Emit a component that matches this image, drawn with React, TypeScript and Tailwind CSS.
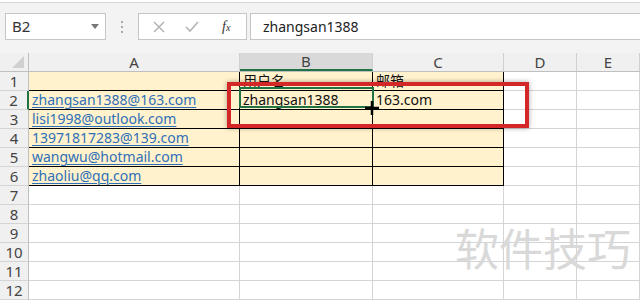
import React from "react";

const cols = [
  { key: "A", w: "w-[211px]" },
  { key: "B", w: "w-[133px]" },
  { key: "C", w: "w-[131px]" },
  { key: "D", w: "w-[73px]" },
  { key: "E", w: "flex-1" },
];

const emails = [
  "zhangsan1388@163.com",
  "lisi1998@outlook.com",
  "13971817283@139.com",
  "wangwu@hotmail.com",
  "zhaoliu@qq.com",
];

function Toolbar() {
  return (
    <div className="h-[51px] bg-[#f3f3f3] border-t-[1px] border-[#d6d6d6] mt-[2px] flex items-start pt-[10px] pl-[5px] pr-0">
      <div className="w-[101px] h-[27px] bg-white border border-[#c6c6c6] flex items-center justify-between pl-[6px] pr-[6px] text-[15px] text-[#333]">
        <span>B2</span>
        <span className="w-0 h-0 border-l-[4px] border-r-[4px] border-t-[5px] border-l-transparent border-r-transparent border-t-[#777]" />
      </div>
      <div className="w-[32px] h-[27px] flex flex-col items-center justify-center gap-[3px]">
        <span className="w-[2px] h-[2px] bg-[#aaa]" />
        <span className="w-[2px] h-[2px] bg-[#aaa]" />
        <span className="w-[2px] h-[2px] bg-[#aaa]" />
      </div>
      <div className="w-[109px] h-[27px] bg-white border border-[#c6c6c6] flex items-center">
        <svg width="14" height="14" viewBox="0 0 14 14" className="ml-[13px]">
          <path d="M2 2 L12 12 M12 2 L2 12" stroke="#b4b4b4" strokeWidth="1.5" />
        </svg>
        <svg width="16" height="14" viewBox="0 0 16 14" className="ml-[18px]">
          <path d="M2 7 L6 11 L14 2" stroke="#b4b4b4" strokeWidth="1.6" fill="none" />
        </svg>
        <span className="ml-[22px] text-[14px] italic text-[#333] font-['Liberation_Serif',serif]">
          f<span className="text-[10px]">x</span>
        </span>
      </div>
      <div className="ml-[3px] flex-1 h-[27px] bg-white border border-r-0 border-[#c6c6c6] flex items-center pl-[12px] text-[14px] text-[#222]">
        zhangsan1388
      </div>
    </div>
  );
}

function HeaderRow() {
  return (
    <div className="flex h-[19px] bg-[#f0f0f0] border-b border-[#bfbfbf]">
      <div className="w-[29px] border-r border-[#bfbfbf] flex items-end justify-end pr-[4px] pb-[3px]">
        <svg width="12" height="12" viewBox="0 0 12 12">
          <path d="M12 0 L12 12 L0 12 Z" fill="#d0d0d0" />
        </svg>
      </div>
      {cols.map((c) => (
        <div
          key={c.key}
          className={`${c.w} flex items-center justify-center text-[15px] leading-none text-[#444] border-r border-[#d0d0d0] ${
            c.key === "B" ? "bg-[#d9d9d9] border-b-2 border-b-[#217346]" : ""
          }`}
        >
          {c.key}
        </div>
      ))}
    </div>
  );
}

function Row({ n }: { n: number }) {
  const inTable = n <= 6;
  const sel = n === 2;
  const cellBase = "h-full flex items-end pl-[3px] pb-[1px] text-[14px] leading-[17px] whitespace-nowrap overflow-hidden";
  const tbl = inTable ? "bg-[#fff2cc] border-r border-b border-black" : "border-r border-b border-[#d4d4d4]";
  return (
    <div className="flex h-[19px]">
      <div
        className={`w-[29px] h-full flex items-center justify-center text-[15px] text-[#444] bg-[#f0f0f0] border-b border-[#d4d4d4] ${
          sel ? "bg-[#d9d9d9] border-r-2 border-r-[#217346]" : "border-r border-r-[#bfbfbf]"
        }`}
      >
        {n}
      </div>
      <div className={`w-[211px] ${cellBase} ${tbl}`}>
        {n >= 2 && n <= 6 ? (
          <span className="text-[#2f6fb8] underline underline-offset-[2px] decoration-[1px]">{emails[n - 2]}</span>
        ) : null}
      </div>
      <div className={`w-[133px] ${cellBase} ${tbl} text-[#111]`}>
        {n === 1 ? "用户名" : n === 2 ? "zhangsan1388" : ""}
      </div>
      <div className={`w-[131px] ${cellBase} ${tbl} text-[#111]`}>
        {n === 1 ? "邮箱" : n === 2 ? "163.com" : ""}
      </div>
      <div className="w-[73px] h-full border-r border-b border-[#d4d4d4]" />
      <div className="flex-1 h-full border-r border-b border-[#d4d4d4]" />
    </div>
  );
}

export default function App() {
  return (
    <div className="w-[640px] h-[300px] overflow-hidden bg-white relative font-['Noto_Sans','Noto_Sans_CJK_SC',sans-serif]">
      <Toolbar />
      <HeaderRow />
      {Array.from({ length: 12 }, (_, i) => (
        <Row key={i} n={i + 1} />
      ))}

      {/* selected cell B2 */}
      <div className="absolute left-[239px] top-[87px] w-[135px] h-[21px] border-2 border-[#217346]" />

      {/* red highlight box */}
      <div className="absolute left-[227px] top-[82px] w-[302px] h-[46px] border-[4px] border-[#d42828] shadow-[0_0_5px_rgba(0,0,0,0.35)]" />

      {/* fill cursor */}
      <svg className="absolute left-[364px] top-[100px] z-10" width="16" height="16" viewBox="0 0 16 16">
        <path d="M8 1 V15 M1 8 H15" stroke="#000" strokeWidth="2.5" />
      </svg>

      {/* watermark */}
      <div className="absolute left-[455px] top-[225px] text-[44px] leading-none text-[#d9d9d9] font-['Noto_Sans_CJK_SC',sans-serif]">
        软件技巧
      </div>
    </div>
  );
}
